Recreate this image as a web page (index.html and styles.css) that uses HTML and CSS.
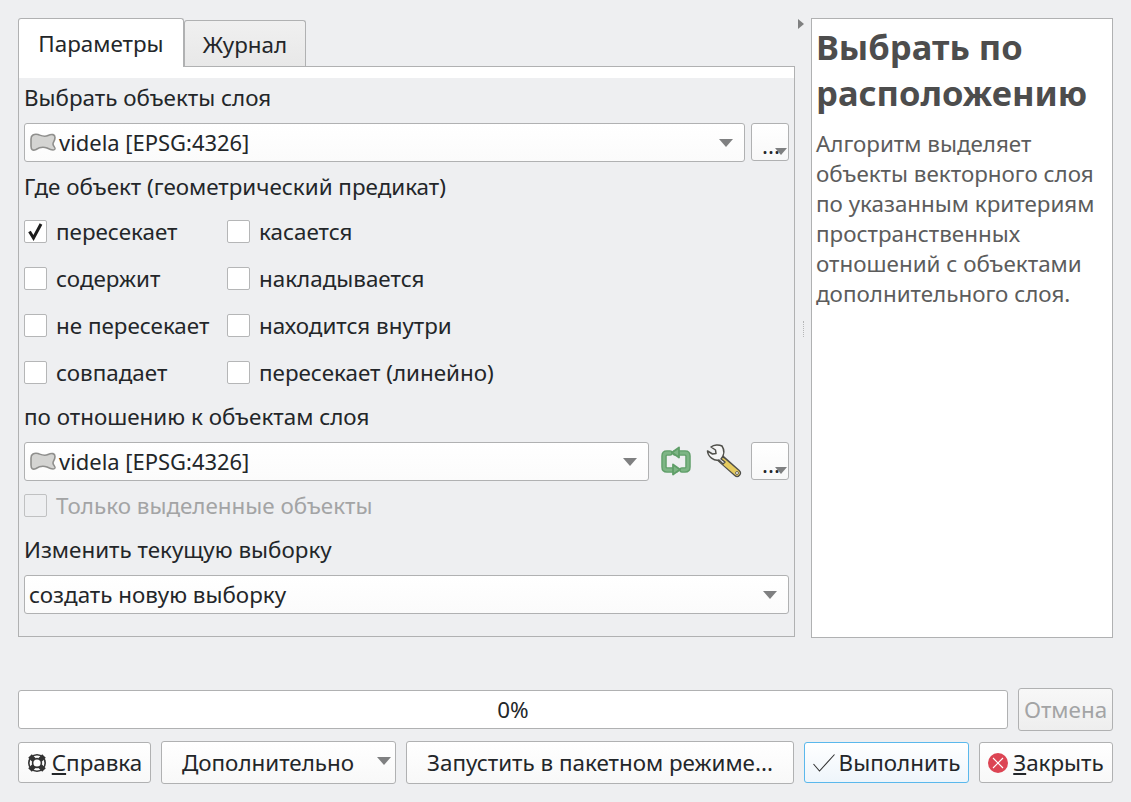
FILE: index.html
```html
<!DOCTYPE html>
<html>
    <head>
        <meta charset="UTF-8">
        <link rel="stylesheet" href="styles.css">
        <title>Выбрать по расположению</title>
    </head>
    <body>
        <div class="dialog">
            <div class="main">
                <div class="left">
                    <div class="tabs">
                        <div class="tab tab-active">Параметры</div>
                        <div class="tab">Журнал</div>
                    </div>
                    <div class="pane">
                        <div class="pane-strip"></div>
                        <div class="label label-first">Выбрать объекты слоя</div>
                        <div class="row">
                            <div class="combo combo-grow">
                                <svg class="layer-icon" width="28" height="20" viewBox="0 0 28 20"><path d="M2 6 C2 2 5 .8 9 1.500 C12 2.500 15 4.500 19 2.500 C23 .5 26 1.500 26 4.500 C26 8 24 9 24 11 C24 13 26.500 14.500 26 16 C25 18 21 16.500 18 15 C14 13.500 10 14.500 7 16.500 C4 18 2 17 2 13 C2 10 2 9 2 6 Z" fill="#d4d4d2" stroke="#8f8f8d" stroke-width="1.600"/></svg>
                                <span class="combo-text combo-latin">videla [EPSG:4326]</span>
                                <span class="arrow"></span>
                            </div>
                            <div class="dots-btn"><span class="dots">...</span><span class="arrow arrow-dots"></span></div>
                        </div>
                        <div class="label label-second">Где объект (геометрический предикат)</div>
                        <div class="checks">
                            <label class="check"><span class="box"><svg width="21" height="21" viewBox="0 0 21 21"><path d="M4.500 10.500 L8.500 17 L16 3" fill="none" stroke="#1c1c1c" stroke-width="3"/></svg></span>пересекает</label>
                            <label class="check"><span class="box"></span>касается</label>
                            <label class="check"><span class="box"></span>содержит</label>
                            <label class="check"><span class="box"></span>накладывается</label>
                            <label class="check"><span class="box"></span>не пересекает</label>
                            <label class="check"><span class="box"></span>находится внутри</label>
                            <label class="check"><span class="box"></span>совпадает</label>
                            <label class="check"><span class="box"></span>пересекает (линейно)</label>
                        </div>
                        <div class="label label-third">по отношению к объектам слоя</div>
                        <div class="row">
                            <div class="combo combo-grow">
                                <svg class="layer-icon" width="28" height="20" viewBox="0 0 28 20"><path d="M2 6 C2 2 5 .8 9 1.500 C12 2.500 15 4.500 19 2.500 C23 .5 26 1.500 26 4.500 C26 8 24 9 24 11 C24 13 26.500 14.500 26 16 C25 18 21 16.500 18 15 C14 13.500 10 14.500 7 16.500 C4 18 2 17 2 13 C2 10 2 9 2 6 Z" fill="#d4d4d2" stroke="#8f8f8d" stroke-width="1.600"/></svg>
                                <span class="combo-text combo-latin">videla [EPSG:4326]</span>
                                <span class="arrow"></span>
                            </div>
                            <svg class="refresh" width="32" height="32" viewBox="0 0 32 32">
                                <g fill="none" stroke="#5f9e68" stroke-width="5.500" stroke-linecap="round">
                                    <path d="M10 7 H7 Q4 7 4 10 V21 Q4 24 7 24 H16"/>
                                    <path d="M15 7 H25 Q28 7 28 10 V21 Q28 24 25 24 H22"/>
                                </g>
                                <g fill="none" stroke="#7db585" stroke-width="2.800" stroke-linecap="round">
                                    <path d="M10 7 H7 Q4 7 4 10 V21 Q4 24 7 24 H16"/>
                                    <path d="M15 7 H25 Q28 7 28 10 V21 Q28 24 25 24 H22"/>
                                </g>
                                <path d="M19 1.500 L12 6.500 L19 11.500 Z M13 18.500 L20 23.500 L13 28.500 Z" fill="#7db585" stroke="#5f9e68" stroke-width="1.800" stroke-linejoin="round"/>
                            </svg>
                            <svg class="wrench" width="36" height="36" viewBox="0 0 36 36">
                                <path d="M13 13 L31 29" stroke="#4f4f4a" stroke-width="8" stroke-linecap="round"/>
                                <path d="M17 17 L31 29" stroke="#e6cb5f" stroke-width="5.500" stroke-linecap="round"/>
                                <path d="M1.500 7 L6.500 10 L10 9.500 L9.500 6 L5 3 C8 .5 13 .5 16 2 C18 5 19 10 15 15 L19 18 L17 20 L13 16 C8 17 2 13 1.500 7 Z" fill="#f6f6f6" stroke="#4f4f4a" stroke-width="1.500" stroke-linejoin="round"/>
                                <circle cx="31" cy="29" r="1.500" fill="#f6f6f6" stroke="#4f4f4a" stroke-width=".8"/>
                            </svg>
                            <div class="dots-btn"><span class="dots">...</span><span class="arrow arrow-dots"></span></div>
                        </div>
                        <label class="check check-disabled"><span class="box box-disabled"></span>Только выделенные объекты</label>
                        <div class="label label-fourth">Изменить текущую выборку</div>
                        <div class="row">
                            <div class="combo combo-grow combo-plain">
                                <span class="combo-text">создать новую выборку</span>
                                <span class="arrow"></span>
                            </div>
                        </div>
                    </div>
                </div>
                <div class="splitter">
                    <span class="collapse-arrow"></span>
                    <span class="grip"></span>
                </div>
                <div class="help">
                    <h2 class="help-title">Выбрать по расположению</h2>
                    <p class="help-text">Алгоритм выделяет объекты векторного слоя по указанным критериям пространственных отношений с объектами дополнительного слоя.</p>
                </div>
            </div>
            <div class="progress-row">
                <div class="progress">0%</div>
                <div class="btn btn-cancel">Отмена</div>
            </div>
            <div class="button-row">
                <div class="btn btn-help">
                    <svg width="20" height="20" viewBox="0 0 20 20">
                        <path d="M3 3 L7 7 M17 3 L13 7 M3 17 L7 13 M17 17 L13 13" stroke="#333" stroke-width="5"/>
                        <circle cx="10" cy="10" r="8.200" fill="none" stroke="#333" stroke-width="1.600"/>
                        <circle cx="10" cy="10" r="4.400" fill="#fff" stroke="#333" stroke-width="1.600"/>
                    </svg>
                    <span><u>С</u>правка</span>
                </div>
                <div class="btn btn-more">Дополнительно<span class="arrow arrow-more"></span></div>
                <div class="btn btn-batch">Запустить в пакетном режиме...</div>
                <div class="btn btn-run">
                    <svg width="22" height="20" viewBox="0 0 22 20"><path d="M.5 11 L6.500 18 L21.500 1.500" fill="none" stroke="#333" stroke-width="1.100"/></svg>
                    <span>Выполнить</span>
                </div>
                <div class="btn btn-close">
                    <svg width="20" height="20" viewBox="0 0 20 20"><circle cx="10" cy="10" r="10" fill="#dc4453"/><path d="M5 5 L15 15 M15 5 L5 15" stroke="#fff" stroke-width="1.100"/></svg>
                    <span><u>З</u>акрыть</span>
                </div>
            </div>
        </div>
    </body>
</html>
```

FILE: styles.css
```css
html, body {
    height: 100%;
    margin: 0;
}
body {
    background-color: #eeeff1;
    color: #232629;
    font-family: "Noto Sans", sans-serif;
    font-size: 22.4px;
    overflow: hidden;
}
.dialog {
    padding: 18px 18px 0 18px;
}
.main {
    display: flex;
    height: 620px;
}
.left {
    width: 777px;
    display: flex;
    flex-direction: column;
    padding-bottom: 1px;
}
.tabs {
    display: flex;
    height: 49px;
    margin-bottom: -1px;
    align-items: flex-end;
    position: relative;
    z-index: 1;
}
.tab {
    box-sizing: border-box;
    width: 122px;
    height: 46px;
    margin-bottom: 1px;
    padding-top: 6px;
    text-align: center;
    background: linear-gradient(#f0f0f0, #e8e8e8);
    border: 1px solid #b0b1b2;
    border-bottom: none;
    border-radius: 3px 3px 0 0;
    line-height: 36px;
    white-space: nowrap;
}
.tab-active {
    width: 166px;
    height: 49px;
    margin-bottom: 0;
    padding-top: 7px;
    background: #fff;
    border-right: 1px solid #b0b1b2;
}
.pane {
    flex: 1;
    box-sizing: border-box;
    border: 1px solid #b0b1b2;
    padding: 0 5px;
}
.pane-strip {
    height: 11px;
    margin: 0 -5px;
    background: #fff;
}
.label {
    line-height: 30px;
    white-space: nowrap;
}
.label-first {
    padding-top: 5px;
    padding-bottom: 10px;
}
.label-second {
    padding-top: 10px;
    padding-bottom: 6px;
}
.label-third {
    padding-top: 6px;
    padding-bottom: 10px;
}
.label-fourth {
    padding-top: 14px;
    padding-bottom: 10px;
}
.row {
    display: flex;
    align-items: center;
    height: 39px;
}
.combo {
    box-sizing: border-box;
    height: 39px;
    display: flex;
    align-items: center;
    background: linear-gradient(#fff, #fbfbfb);
    border: 1px solid #b0b1b2;
    border-radius: 3px;
    padding-left: 4px;
    padding-right: 11px;
}
.combo-grow {
    flex: 1;
}
.combo-text {
    flex: 1;
    white-space: nowrap;
}
.combo-latin {
    font-size: 21.95px;
}
.layer-icon {
    margin-right: 2px;
    flex: none;
}
.arrow {
    width: 0;
    height: 0;
    border-left: 7px solid transparent;
    border-right: 7px solid transparent;
    border-top: 8px solid #7f8081;
}
.dots-btn {
    box-sizing: border-box;
    width: 38px;
    height: 38px;
    margin-left: 6px;
    align-self: flex-start;
    position: relative;
    background: linear-gradient(#fff, #f8f8f8);
    border: 1px solid #b0b1b2;
    border-radius: 3px;
}
.dots {
    position: absolute;
    left: 10px;
    top: 7px;
    line-height: 30px;
}
.arrow-dots {
    position: absolute;
    right: 1px;
    top: 24px;
    border-left-width: 6px;
    border-right-width: 6px;
    border-top-width: 7px;
}
.refresh {
    margin-left: 11px;
    flex: none;
}
.wrench {
    margin-left: 14px;
    margin-right: 3px;
    flex: none;
}
.checks {
    display: grid;
    grid-template-columns: 203px 1fr;
    grid-auto-rows: 47px;
}
.check {
    display: flex;
    align-items: center;
    white-space: nowrap;
}
.box {
    box-sizing: border-box;
    width: 23px;
    height: 23px;
    margin-right: 9px;
    flex: none;
    background: #fff;
    border: 1px solid #b5b6b7;
    border-radius: 2px;
}
.box svg {
    display: block;
}
.check-disabled {
    height: 47px;
    margin-top: 1px;
    margin-bottom: -8px;
    color: #a3a4a5;
}
.box-disabled {
    background: #eeeff1;
    border-color: #c0c1c2;
}
.splitter {
    width: 16px;
    position: relative;
}
.collapse-arrow {
    position: absolute;
    left: 3px;
    top: 1px;
    width: 0;
    height: 0;
    border-top: 5px solid transparent;
    border-bottom: 5px solid transparent;
    border-left: 6px solid #7f8081;
}
.grip {
    position: absolute;
    left: 8px;
    top: 303px;
    height: 16px;
    border-left: 1px dotted #b5b6b7;
}
.help {
    flex: 1;
    box-sizing: border-box;
    background: #fff;
    border: 1px solid #b0b1b2;
    padding: 5px 4px 0 4px;
}
.help-title {
    margin: 0;
    font-size: 34.5px;
    line-height: 46px;
    font-weight: 700;
    color: #4d4d4d;
}
.help-text {
    margin: 13px 0 0 0;
    line-height: 30px;
    color: #5c5c5c;
}
.progress-row {
    display: flex;
    align-items: center;
    gap: 10px;
    margin-top: 50px;
    height: 43px;
}
.progress {
    flex: 1;
    box-sizing: border-box;
    height: 39px;
    line-height: 37px;
    text-align: center;
    background: #fff;
    border: 1px solid #b0b1b2;
    border-radius: 3px;
}
.btn {
    box-sizing: border-box;
    display: flex;
    align-items: center;
    justify-content: center;
    height: 41px;
    background: linear-gradient(#fff, #f8f8f8);
    border: 1px solid #b0b1b2;
    border-radius: 3px;
    white-space: nowrap;
}
.btn-cancel {
    width: 95px;
    height: 43px;
    background: linear-gradient(#f8f8f8, #eeeeee);
    color: #a3a4a5;
}
.button-row {
    display: flex;
    align-items: center;
    gap: 10px;
    margin-top: 10px;
}
.btn-help {
    width: 133px;
    gap: 5px;
}
.btn-more {
    width: 235px;
    height: 43px;
    position: relative;
    padding-right: 21px;
}
.arrow-more {
    position: absolute;
    right: 4px;
    top: 15px;
}
.btn-batch {
    width: 388px;
    height: 43px;
}
.btn-run {
    width: 165px;
    gap: 4px;
    background: linear-gradient(#fff, #eef5fb);
    border-color: #5ab8ec;
}
.btn-close {
    width: 134px;
    gap: 5px;
}
```
